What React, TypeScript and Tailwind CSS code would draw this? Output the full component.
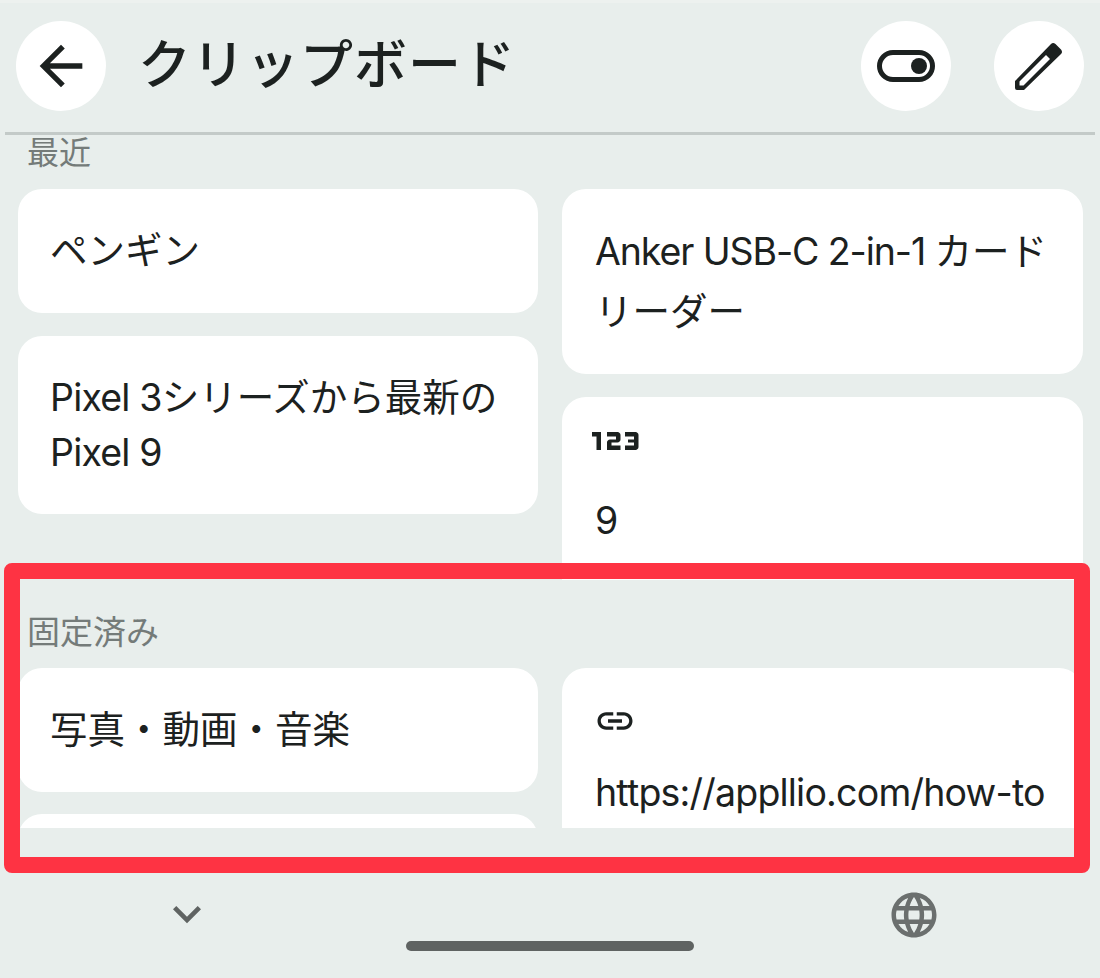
import React from 'react';
import { MdArrowBack, MdExpandMore, MdLanguage, MdLink, Md123 } from 'react-icons/md';

const FONT = "font-['Inter','Noto_Sans_CJK_JP',sans-serif]";

const Card: React.FC<{ className: string; children: React.ReactNode }> = ({ className, children }) => (
    <div className={`bg-white rounded-[24px] pr-[20px] shrink-0 ${className}`}>{children}</div>
);

const RoundButton: React.FC<{ children: React.ReactNode }> = ({ children }) => (
    <div className="w-[90px] h-[90px] rounded-full bg-white flex items-center justify-center shrink-0">{children}</div>
);

const ToggleIcon = () => (
    <svg width="58" height="32" viewBox="0 0 58 32" fill="none">
        <rect x="2.5" y="2.5" width="53" height="27" rx="13.5" stroke="#1c2120" strokeWidth="5" />
        <circle cx="42" cy="16" r="8" fill="#1c2120" />
    </svg>
);

const PencilIcon = () => (
    <svg width="48" height="48" viewBox="0 0 48 48">
        <path
            fillRule="evenodd"
            fill="#1c2120"
            d="M0 39 L36 2 Q38 0 40.5 2 L46 7.5 Q48 10 46 12 L9 48 L2 48 Q0 48 0 46 Z M4.5 39.5 L4.5 43.5 L8.5 43.5 L35 17 L31 13 Z"
        />
    </svg>
);

export default function App() {
    return (
        <div className={`relative w-[1100px] h-[978px] overflow-hidden bg-[#e8eeec] text-[#1c2120] flex flex-col ${FONT}`}>
            {/* Header */}
            <div className="h-[3px] bg-[#edf1ef] shrink-0" />
            <div className="h-[129px] shrink-0 flex items-start pl-[16px] pr-[16px] pt-[18px]">
                <RoundButton>
                    <MdArrowBack size={64} color="#1c2120" />
                </RoundButton>
                <h1 className="ml-[32px] text-[53px] leading-[88px] font-medium tracking-[1px]">クリップボード</h1>
                <div className="ml-auto flex gap-[43px]">
                    <RoundButton>
                        <ToggleIcon />
                    </RoundButton>
                    <RoundButton>
                        <PencilIcon />
                    </RoundButton>
                </div>
            </div>
            <div className="mx-[5px] h-[3px] bg-[#c3cac8] shrink-0" />

            {/* Recent */}
            <div className="shrink-0 pl-[18px] pr-[17px]">
                <p className="pl-[9px] h-[54px] text-[32px] leading-[36px] text-[#747b79]">最近</p>
                <div className="h-[391px] overflow-hidden grid grid-cols-[520px_521px] gap-x-[24px] items-start">
                    <div className="flex flex-col gap-[23px]">
                        <Card className="h-[124px] pl-[32px] flex items-center text-[37.5px]">ペンギン</Card>
                        <Card className="h-[178px] pl-[32px] flex items-center text-[37.5px] leading-[55px]">
                            <span className="whitespace-nowrap">
                                <span className="tracking-[-0.8px]">Pixel 3</span>シリーズから最新の
                                <br />
                                <span className="tracking-[-0.8px]">Pixel 9</span>
                            </span>
                        </Card>
                    </div>
                    <div className="flex flex-col gap-[23px]">
                        <Card className="h-[185px] pl-[33px] flex items-center text-[37.5px] leading-[60px]">
                            <span className="whitespace-nowrap">
                                <span className="tracking-[-1.1px]">Anker USB-C 2-in-1 </span>カード
                                <br />
                                リーダー
                            </span>
                        </Card>
                        <Card className="h-[220px] pl-[33px] pt-[8px]">
                            <Md123 size={72} color="#1c2120" className="-ml-[15px]" />
                            <p className="mt-[22px] text-[37.5px] leading-[44px]">9</p>
                        </Card>
                    </div>
                </div>
            </div>

            {/* Pinned */}
            <div className="shrink-0 pl-[18px] pr-[17px]">
                <p className="pl-[9px] pt-[34px] h-[88px] text-[33px] leading-[36px] text-[#747b79]">固定済み</p>
                <div className="h-[160px] overflow-hidden grid grid-cols-[520px_521px] gap-x-[24px] items-start">
                    <div className="flex flex-col gap-[22px]">
                        <Card className="h-[124px] pl-[32px] flex items-center text-[37.5px]">写真・動画・音楽</Card>
                        <Card className="h-[124px] pl-[32px]">{''}</Card>
                    </div>
                    <Card className="h-[220px] pl-[33px] pt-[32px]">
                        <MdLink size={42} color="#1c2120" className="-ml-[1px]" />
                        <p className="mt-[29px] text-[37.5px] leading-[44px] whitespace-nowrap tracking-[-0.8px]">https://appllio.com/how-to</p>
                    </Card>
                </div>
            </div>

            {/* Bottom bar */}
            <div className="relative flex-1">
                <MdExpandMore size={56} color="#5f6362" className="absolute left-[159px] top-[58px]" />
                <MdLanguage size={54} color="#6b6f6e" className="absolute left-[887px] top-[60px]" />
                <div className="absolute left-[406px] top-[113px] w-[288px] h-[10px] rounded-full bg-[#5f6362]" />
            </div>

            {/* Red highlight */}
            <div className="absolute left-[4px] top-[563px] w-[1086px] h-[310px] border-[16px] border-[#fe3343] rounded-[8px]" />
        </div>
    );
}
